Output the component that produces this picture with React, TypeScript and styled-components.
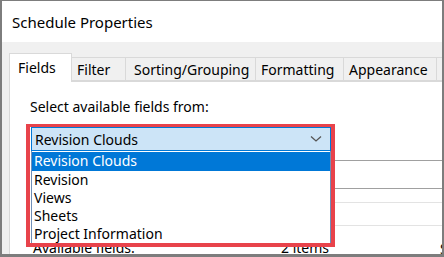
import React from 'react'
import styled, { createGlobalStyle } from 'styled-components'

const GlobalStyle = createGlobalStyle`
  html, body {
    margin: 0;
    padding: 0;
    background: #ffffff;
  }
  body {
    font-family: 'Noto Sans', 'Open Sans', sans-serif;
    color: #000;
  }
`

const RED = '#e8434b'
const BLUE = '#0078d7'

const Window = styled.div`
  width: 444px;
  height: 257px;
  box-sizing: border-box;
  border: 2px solid #7d7d7d;
  border-top-width: 1px;
  border-bottom-width: 3px;
  background: #f0f0f0;
  display: flex;
  flex-direction: column;
  overflow: hidden;
`

const TitleBar = styled.div`
  height: 41px;
  flex: none;
  background: #ffffff;
  display: flex;
  align-items: center;
  padding-left: 10px;
  font-size: 15px;
`

const Body = styled.div`
  flex: 1;
  padding: 11px 0 0 5px;
  display: flex;
  flex-direction: column;
  min-height: 0;
`

const TabRow = styled.div`
  display: flex;
  align-items: flex-end;
  height: 28px;
  padding-left: 2px;
  position: relative;
  z-index: 1;
`

const Tab = styled.div<{ $active?: boolean; $w: number; $pad?: number }>`
  width: ${p => p.$w}px;
  flex: none;
  box-sizing: border-box;
  height: ${p => (p.$active ? 29 : 24)}px;
  margin-bottom: ${p => (p.$active ? -1 : 0)}px;
  margin-left: ${p => (p.$active ? 0 : -1)}px;
  border: 1px solid #d9d9d9;
  border-bottom: ${p => (p.$active ? 'none' : '1px solid #d9d9d9')};
  background: ${p => (p.$active ? '#ffffff' : '#f0f0f0')};
  font-size: 14px;
  display: flex;
  align-items: ${p => (p.$active ? 'flex-start' : 'center')};
  padding-top: ${p => (p.$active ? 4 : 0)}px;
  padding-left: ${p => p.$pad ?? (p.$active ? 8 : 5)}px;
  white-space: nowrap;
  overflow: hidden;
`

const Panel = styled.div`
  flex: 1;
  background: #ffffff;
  border-top: 1px solid #d9d9d9;
  border-left: 1px solid #d9d9d9;
  margin-left: 2px;
  padding: 15px 0 0 20px;
  display: flex;
  flex-direction: column;
`

const Label = styled.div`
  font-size: 14px;
  height: 20px;
  line-height: 20px;
`

const Fields = styled.div`
  margin-top: 10px;
  display: flex;
  gap: 2px;
`

const Picker = styled.div`
  width: 300px;
  flex: none;
  position: relative;
  margin-left: 1px;
  display: flex;
  flex-direction: column;
`

const Combo = styled.div`
  height: 24px;
  box-sizing: border-box;
  background: #cce4f7;
  border: 1px solid ${BLUE};
  display: flex;
  align-items: center;
  justify-content: space-between;
  padding: 0 8px 0 3px;
  font-size: 14px;
  position: relative;
  z-index: 2;
`

const Behind = styled.div`
  margin-top: 87px;
  display: flex;
  justify-content: space-between;
  font-size: 14px;
  padding: 0 2px 0 2px;
  white-space: nowrap;
`

const DropList = styled.div`
  position: absolute;
  top: 24px;
  left: 0;
  width: 300px;
  box-sizing: border-box;
  border: 1px solid #6f8fb8;
  border-top: none;
  background: #ffffff;
  z-index: 2;
`

const Option = styled.div<{ $selected?: boolean }>`
  height: 18px;
  line-height: 18px;
  font-size: 14px;
  padding-left: 2px;
  background: ${p => (p.$selected ? BLUE : '#ffffff')};
  color: ${p => (p.$selected ? '#ffffff' : '#000000')};
  &:first-child {
    margin-top: 1px;
    height: 19px;
  }
`

const Highlight = styled.div`
  position: absolute;
  top: -3px;
  left: -5px;
  width: 309px;
  height: 123px;
  box-sizing: border-box;
  border: 4px solid ${RED};
  border-top-width: 3px;
  z-index: 3;
`

const Scheduled = styled.div`
  flex: 1;
  min-width: 0;
  display: flex;
  flex-direction: column;
`

const Rule = styled.div<{ $top: number; $light?: boolean }>`
  margin-top: ${p => p.$top}px;
  border-top: 1px solid ${p => (p.$light ? '#e3e3e3' : '#a0a0a0')};
`

const Peek = styled.div`
  margin-top: 13px;
  font-size: 14px;
  padding-left: 107px;
  white-space: nowrap;
`

function Chevron() {
  return (
    <svg width='12' height='8' viewBox='0 0 12 8'>
      <path d='M1 1.5 L6 6 L11 1.5' fill='none' stroke='#555' strokeWidth='1.3' />
    </svg>
  )
}

const TABS: [string, number][] = [
  ['Fields', 63],
  ['Filter', 55],
  ['Sorting/Grouping', 131],
  ['Formatting', 89],
  ['Appearance', 94],
  ['Embedded', 80]
]

const OPTIONS = ['Revision Clouds', 'Revision', 'Views', 'Sheets', 'Project Information']

export default function App() {
  return (
    <>
      <GlobalStyle />
      <Window>
        <TitleBar>Schedule Properties</TitleBar>
        <Body>
          <TabRow>
            {TABS.map(([name, w], i) => (
              <Tab
                key={name}
                $w={w}
                $active={i === 0}
                $pad={i === TABS.length - 1 ? 8 : i === 2 ? 8 : undefined}
              >
                {name}
              </Tab>
            ))}
          </TabRow>
          <Panel>
            <Label>Select available fields from:</Label>
            <Fields>
              <Picker>
                <Combo>
                  <span>Revision Clouds</span>
                  <Chevron />
                </Combo>
                <DropList>
                  {OPTIONS.map((o, i) => (
                    <Option key={o} $selected={i === 0}>
                      {o}
                    </Option>
                  ))}
                </DropList>
                <Highlight />
                <Behind>
                  <span>Available fields:</span>
                  <span>2 items</span>
                </Behind>
              </Picker>
              <Scheduled>
                <Rule $top={33} />
                <Rule $top={27} />
                <Rule $top={13} $light />
                <Rule $top={22} $light />
                <Peek>Scheduled fields</Peek>
              </Scheduled>
            </Fields>
          </Panel>
        </Body>
      </Window>
    </>
  )
}
